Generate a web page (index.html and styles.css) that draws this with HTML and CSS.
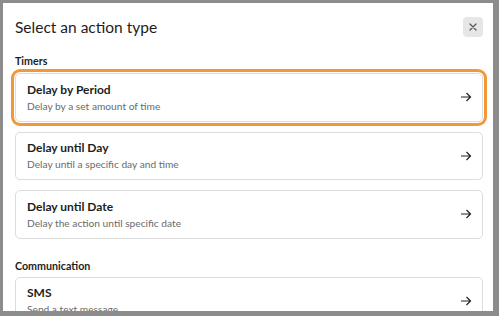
FILE: index.html
```html
<!DOCTYPE html>
<html lang="en">
<head>
    <meta charset="UTF-8">
    <meta name="viewport" content="width=device-width, initial-scale=1.0">
    <title>Select an action type</title>
    <link rel="stylesheet" href="styles.css">
</head>
<body>
    <div class="modal">
        <!-- Header -->
        <div class="modal-header">
            <h1>Select an action type</h1>
            <button class="close-btn" aria-label="Close">
                <svg width="10" height="10" viewBox="0 0 10 10"><path d="M2 2l6 6M8 2l-6 6" stroke="#555" stroke-width="1.2" stroke-linecap="round"/></svg>
            </button>
        </div>

        <!-- Timers -->
        <h2 class="group-title">Timers</h2>
        <div class="action-list">
            <button class="action focused">
                <span class="action-text">
                    <span class="action-name">Delay by Period</span>
                    <span class="action-desc">Delay by a set amount of time</span>
                </span>
                <svg class="arrow" width="12" height="10" viewBox="0 0 12 10"><path d="M1 5h9.5M6.5 1l4 4-4 4" fill="none" stroke="#222" stroke-width="1.2"/></svg>
            </button>
            <button class="action">
                <span class="action-text">
                    <span class="action-name">Delay until Day</span>
                    <span class="action-desc">Delay until a specific day and time</span>
                </span>
                <svg class="arrow" width="12" height="10" viewBox="0 0 12 10"><path d="M1 5h9.5M6.5 1l4 4-4 4" fill="none" stroke="#222" stroke-width="1.2"/></svg>
            </button>
            <button class="action">
                <span class="action-text">
                    <span class="action-name">Delay until Date</span>
                    <span class="action-desc">Delay the action until specific date</span>
                </span>
                <svg class="arrow" width="12" height="10" viewBox="0 0 12 10"><path d="M1 5h9.5M6.5 1l4 4-4 4" fill="none" stroke="#222" stroke-width="1.2"/></svg>
            </button>
        </div>

        <!-- Communication -->
        <h2 class="group-title section">Communication</h2>
        <div class="action-list">
            <button class="action">
                <span class="action-text">
                    <span class="action-name">SMS</span>
                    <span class="action-desc">Send a text message</span>
                </span>
                <svg class="arrow" width="12" height="10" viewBox="0 0 12 10"><path d="M1 5h9.5M6.5 1l4 4-4 4" fill="none" stroke="#222" stroke-width="1.2"/></svg>
            </button>
        </div>
    </div>
</body>
</html>
```

FILE: styles.css
```css
body {
    margin: 0;
    background-color: #8c8c8c;
    font-family: Lato, "Noto Sans", sans-serif;
    height: 316px;
    overflow: hidden;
}

.modal {
    background-color: #fff;
    margin: 3px 6px 0 3px;
    height: 308px;
    padding: 0 10px 0 12px;
    overflow: hidden;
    box-sizing: border-box;
}

.modal-header {
    display: flex;
    align-items: center;
    justify-content: space-between;
    padding-top: 11px;
    height: 26px;
}

.modal-header h1 {
    margin: 0;
    font-size: 15.5px;
    font-weight: 400;
    color: #1d1d1d;
}

.close-btn {
    width: 20px;
    height: 20px;
    border: none;
    border-radius: 4px;
    background-color: #e6e6e6;
    display: flex;
    align-items: center;
    justify-content: center;
    padding: 0;
}

.group-title {
    margin: 14px 0 6px;
    font-size: 10.7px;
    line-height: 13px;
    font-weight: 700;
    color: #1d1d1d;
}

.group-title.section {
    margin-top: 20px;
    margin-bottom: 5px;
}

.action-list {
    display: flex;
    flex-direction: column;
    gap: 10px;
}

.action {
    display: flex;
    align-items: center;
    justify-content: space-between;
    height: 48.5px;
    padding: 0 10px 0 11px;
    border: 1px solid #dcdcdc;
    border-radius: 5px;
    background-color: #fff;
    font-family: inherit;
    text-align: left;
    flex-shrink: 0;
}

.action.focused {
    box-shadow: 0 0 0 1px #fff, 0 0 0 4px #f2983a;
}

.action-text {
    display: flex;
    flex-direction: column;
    gap: 3px;
}

.action-name {
    font-size: 12px;
    line-height: 15px;
    font-weight: 700;
    color: #1d1d1d;
}

.action-desc {
    font-size: 10.2px;
    line-height: 13px;
    color: #6b6b6b;
}

.arrow {
    flex-shrink: 0;
}
```
